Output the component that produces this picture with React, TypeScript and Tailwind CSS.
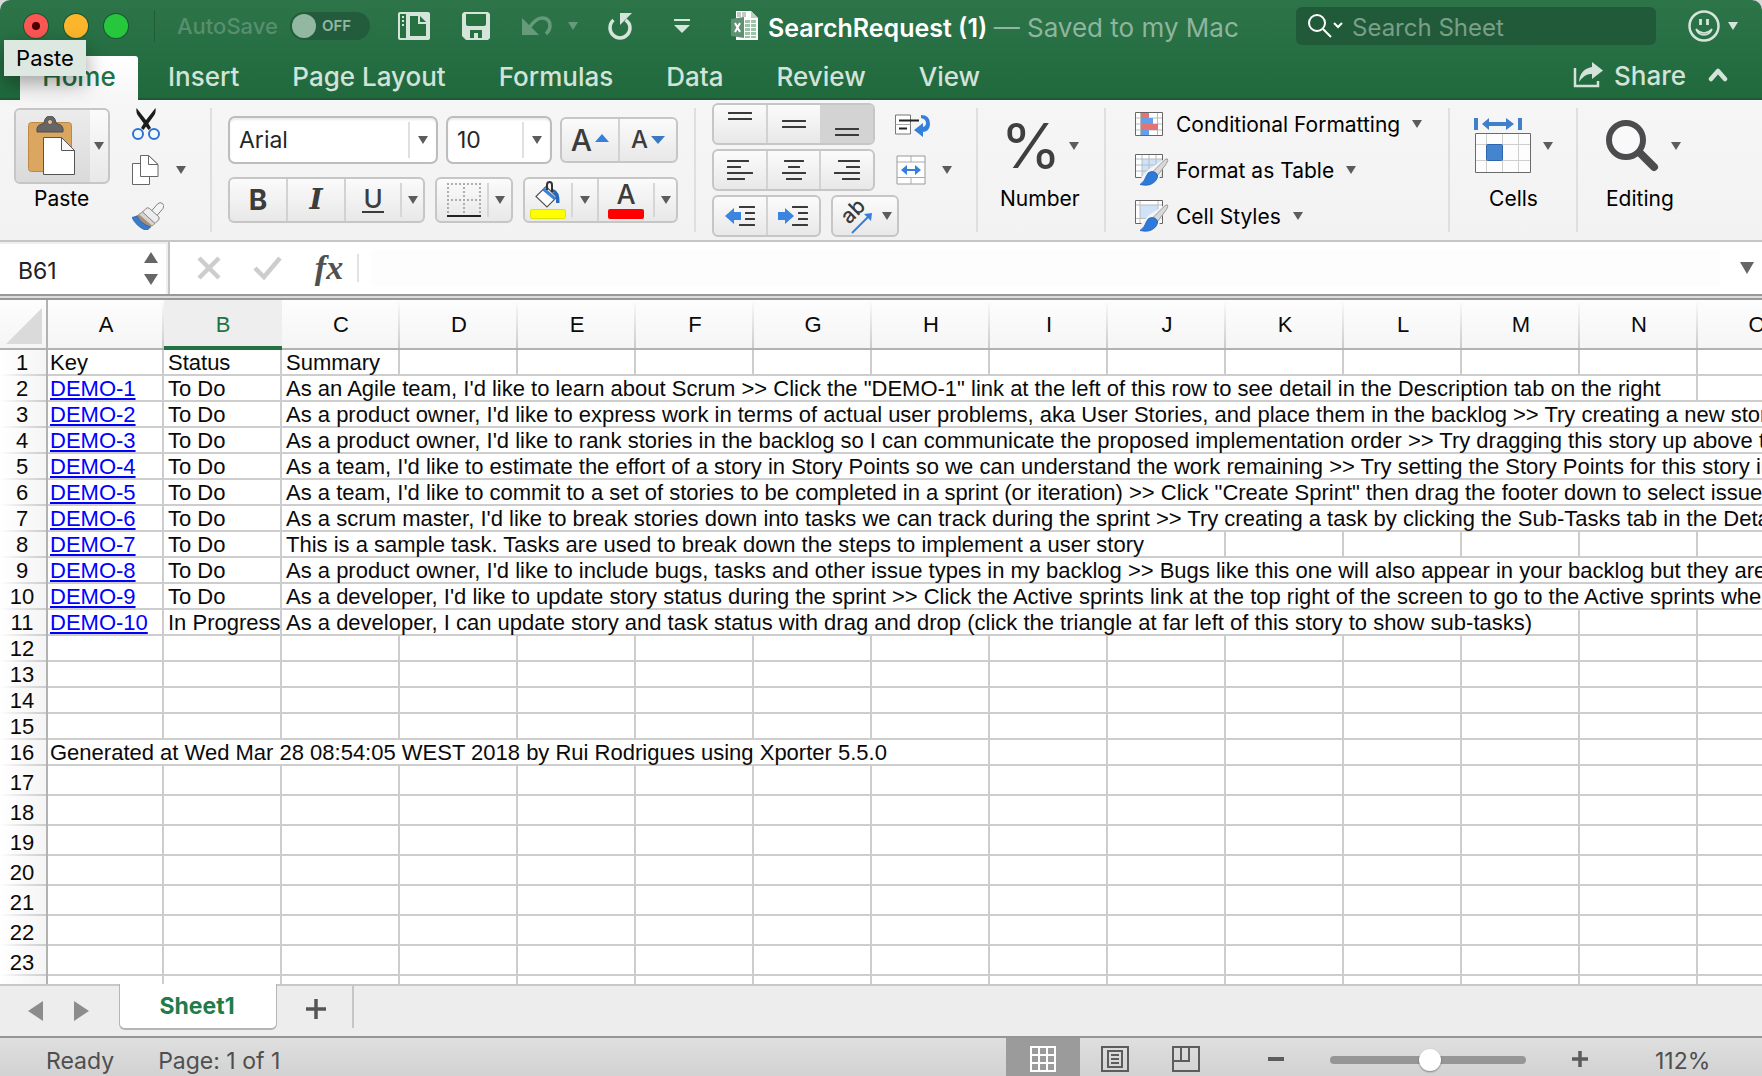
import React, { useState } from "react";

const SUMMARY_LINKS = [
  "As an Agile team, I'd like to learn about Scrum >> Click the \"DEMO-1\" link at the left of this row to see detail in the Description tab on the right",
  "As a product owner, I'd like to express work in terms of actual user problems, aka User Stories, and place them in the backlog >> Try creating a new story",
  "As a product owner, I'd like to rank stories in the backlog so I can communicate the proposed implementation order >> Try dragging this story up above the",
  "As a team, I'd like to estimate the effort of a story in Story Points so we can understand the work remaining >> Try setting the Story Points for this story in",
  "As a team, I'd like to commit to a set of stories to be completed in a sprint (or iteration) >> Click \"Create Sprint\" then drag the footer down to select issues",
  "As a scrum master, I'd like to break stories down into tasks we can track during the sprint >> Try creating a task by clicking the Sub-Tasks tab in the Detail",
  "This is a sample task. Tasks are used to break down the steps to implement a user story",
  "As a product owner, I'd like to include bugs, tasks and other issue types in my backlog >> Bugs like this one will also appear in your backlog but they are",
  "As a developer, I'd like to update story status during the sprint >> Click the Active sprints link at the top right of the screen to go to the Active sprints where",
  "As a developer, I can update story and task status with drag and drop (click the triangle at far left of this story to show sub-tasks)",
];
// Number of columns each summary runs across, starting at column C.
const SUMMARY_SPANS = [12, 13, 13, 13, 13, 13, 8, 13, 13, 11];
const COLUMNS = "ABCDEFGHIJKLMNO".split("");

type Cell = { text: string; span?: number; link?: boolean };

const ROWS: Cell[][] = [
  [{ text: "Key" }, { text: "Status" }, { text: "Summary" }],
  ...SUMMARY_LINKS.map((text, i) => [
    { text: `DEMO-${i + 1}`, link: true },
    { text: i === 9 ? "In Progress" : "To Do" },
    { text, span: SUMMARY_SPANS[i] },
  ]),
  [],
  [],
  [],
  [],
  [{ text: "Generated at Wed Mar 28 08:54:05 WEST 2018 by Rui Rodrigues using Xporter 5.5.0", span: 8 }],
  ...Array.from({ length: 8 }, () => []),
];

function Caret({ className = "h-2 w-2.5 text-[#5c5c5c]", up = false }: { className?: string; up?: boolean }) {
  return (
    <svg viewBox="0 0 10 8" preserveAspectRatio="none" className={`shrink-0 ${className}`} fill="currentColor" aria-hidden="true">
      <path d={up ? "M0 8h10L5 0z" : "M0 0h10L5 8z"} />
    </svg>
  );
}

const Short = () => <span className="my-1 w-0.5 shrink-0 bg-[#d6d6d6]" />;
const Full = () => <span className="w-0.5 shrink-0 bg-[#d2d2d2]" />;
const Sep = () => <span className="my-2 w-0.5 shrink-0 bg-[#dfdfdf]" />;

function Group({ className, children }: { className: string; children: React.ReactNode }) {
  return (
    <div className={`flex overflow-hidden rounded-[6px] border-2 border-[#c6c6c6] bg-linear-to-b from-[#fbfbfb] to-[#e8e8e8] ${className}`}>
      {children}
    </div>
  );
}

function Btn({ label, className = "", pressed, children }: { label: string; className?: string; pressed?: boolean; children: React.ReactNode }) {
  return (
    <button type="button" aria-label={label} aria-pressed={pressed} className={`flex shrink-0 items-center justify-center ${className}`}>
      {children}
    </button>
  );
}

/* Horizontal strokes, each as [x, y, width]. */
function Lines({ w = 26, lines, children }: { w?: number; lines: number[][]; children?: React.ReactNode }) {
  return (
    <svg width={w} height="38" viewBox={`0 0 ${w} 38`} aria-hidden="true">
      {lines.map(([x, y, len], i) => (
        <rect key={i} x={x} y={y - 1} width={len} height="2" rx="0.5" fill="#3a3a3a" />
      ))}
      {children}
    </svg>
  );
}

function PasteIcon() {
  return (
    <svg width="48" height="60" viewBox="0 0 48 60" aria-hidden="true">
      <rect x="0.5" y="6.5" width="43" height="49" rx="3" fill="#dba65f" stroke="#bd8748" />
      <path d="M9 16q-1-7 5-8l2-1q1-7 6-7t6 7l2 1q6 1 5 8z" fill="#666" stroke="#4f4f4f" />
      <circle cx="22" cy="6" r="2.5" fill="#e5c79c" stroke="#555" />
      <path d="M15.500 21.500h18l13 13v24h-31z" fill="#fff" stroke="#555" />
      <path d="M33.500 21.500v13h13z" fill="#f7f7f7" stroke="#555" />
    </svg>
  );
}

function CutIcon() {
  return (
    <svg width="28" height="32" viewBox="0 0 28 32" aria-hidden="true">
      <path d="M4.500 0Q3.500 5 7 9l9.500 13 2.500-2L15.500 14z" fill="#1c1c1c" />
      <path d="M23.500 0Q24.500 5 21 9l-9.500 13L9 20l3.500-6z" fill="#1c1c1c" />
      <circle cx="6" cy="26" r="5" fill="#f4f8fe" stroke="#2b73cf" strokeWidth="2" />
      <circle cx="22" cy="26" r="5" fill="#f4f8fe" stroke="#2b73cf" strokeWidth="2" />
    </svg>
  );
}

function CopyIcon() {
  return (
    <svg width="27" height="30" viewBox="0 0 27 30" fill="#fff" stroke="#666" aria-hidden="true">
      <path d="M.5 8.500h17v21H.5z" />
      <path d="M8.500.5h8l9.500 9v12H8.500z" />
      <path d="M16.500.5v9H26z" />
    </svg>
  );
}

function PainterIcon() {
  return (
    <svg width="32" height="28" viewBox="0 0 32 28" aria-hidden="true">
      <path d="M19 9.500l6.500-7.500q2.500-2.500 5-.5t.5 5L24.500 14z" fill="#f4f4f4" stroke="#808080" />
      <path d="M14 6.500q1.500-1.500 3.500 0l9 8q1.500 1.500 0 3.500L23 21.500 10.500 10z" fill="#ededed" stroke="#808080" />
      <path d="M10.500 10L23 21.500l-3 2.500L6.500 12.500z" fill="#d8d3cf" stroke="#8d8178" strokeWidth="0.800" />
      <path d="M6.500 12.500L20 24l-2.500 2Q8 22 4 14z" fill="#a58d76" />
      <path d="M0 15.500l5-1.500q4 8 13.500 11L15.500 28H13Q4 24 0 15.500z" fill="#3a7ccb" stroke="#2a62a9" strokeWidth="0.800" />
    </svg>
  );
}

function BucketIcon() {
  return (
    <svg width="28" height="28" viewBox="0 0 28 28" aria-hidden="true">
      <path d="M12 5.500L23 16 13 26 2 15.500z" fill="#fff" stroke="#555" strokeWidth="1.200" />
      <path d="M8 9l12 10 2-2.500L11 7z" fill="#3b83da" />
      <path d="M19 8q7 2 6.500 14h-3.500q1-8-4-12z" fill="#2566b8" />
      <path d="M13 9V4q0-3 2.500-3T18 4v7" fill="none" stroke="#333" strokeWidth="2" />
    </svg>
  );
}

function BordersIcon() {
  return (
    <svg width="34" height="34" viewBox="0 0 34 34" fill="none" stroke="#adadad" strokeWidth="2" strokeDasharray="2 2" aria-hidden="true">
      <path d="M0 1h34M0 17h34M1 0v32M17 0v32M33 0v32" />
      <path d="M0 33h34" stroke="#222" strokeDasharray="none" />
    </svg>
  );
}

function WrapIcon() {
  return (
    <svg width="36" height="24" viewBox="0 0 36 24" aria-hidden="true">
      <path d="M.5 1h15v19H.5z" fill="#fff" stroke="#777" />
      <path d="M.5 10.500h15" stroke="#aaa" />
      <path d="M4 6.500h20M4 14.500h8" stroke="#222" strokeWidth="2" />
      <path d="M26 1q9 0 9 9 0 7-7 8v5l-9-7 9-7v4q3-1 3-4 0-4-5-5z" fill="#3580dd" />
    </svg>
  );
}

function MergeIcon() {
  return (
    <svg width="30" height="30" viewBox="0 0 30 30" aria-hidden="true">
      <path d="M1 1h28v28H1z" fill="#fff" stroke="#999" />
      <path d="M1 7h28M1 22.500h28M15 1v6M15 22.500V29" stroke="#aaa" />
      <path d="M5 15l6-5v4h8v-4l6 5-6 5v-4h-8v4z" fill="#3580dd" />
    </svg>
  );
}

function CondIcon() {
  return (
    <svg width="28" height="24" viewBox="0 0 28 24" aria-hidden="true">
      <path d="M.5.5h27v23H.5z" fill="#fff" />
      <path d="M.5 6h27M.5 12h27M.5 18h27M5.500.5v23M22.500.5v23" stroke="#bbb" />
      <path d="M6 .5h8V6H6zM6 12h17v6H6z" fill="#e57373" />
      <path d="M6 6h12v6H6zM6 18h8v5.500H6z" fill="#62a0e8" />
      <path d="M.5.5h27v23H.5z" fill="none" stroke="#666" />
    </svg>
  );
}

function BrushTableIcon({ styles = false }: { styles?: boolean }) {
  return (
    <svg width="34" height="32" viewBox="0 0 34 32" aria-hidden="true">
      <path d="M.5.5h27v23H.5z" fill="#fff" />
      {styles ? (
        <>
          <path d="M5 5h18v14H5z" fill="#cfe2f7" />
          <path d="M.5 5h27M.5 18.500h27M5 .5v23M23 .5v23" stroke="#bbb" fill="none" />
        </>
      ) : (
        <>
          <path d="M7 5h20v18H7z" fill="#cfe2f7" />
          <path d="M.5 5h27M.5 11h27M.5 17h27M7 .5v23M14 .5v23M21 .5v23" stroke="#b4bcc6" fill="none" />
        </>
      )}
      <path d="M.5.5h27v23H.5z" fill="none" stroke="#666" />
      <path d="M31 4L14 15 6 24v8h12l7-9z" fill="#f4f4f4" />
      <path d="M32.500 5q1 1-1 4.500l-9 12-4.500-4L28.500 7q3-3 4-2z" fill="#d9d9d9" stroke="#888" strokeWidth="0.800" />
      <path d="M17 17.500q-4 0-5.500 4Q10 27 5 30.500q10 2.500 15.500-3.500 3-4 2-6-1.500-3.500-5.500-3.500z" fill="#2f79d9" stroke="#1f5fb4" strokeWidth="0.800" />
    </svg>
  );
}

function CellsIcon() {
  return (
    <svg width="58" height="56" viewBox="0 0 58 56" aria-hidden="true">
      <path d="M0 0h4v12H0zM44 0h4v12h-4z" fill="#3f7fcb" />
      <path d="M8 6l7-6v4h17V0l8 6-8 6V8H15v4z" fill="#3f7fcb" />
      <path d="M1.500 15.500h55v39h-55z" fill="#fdfdfd" />
      <path d="M1.500 26.500h55M1.500 42.500h55M12.500 15.500v39M28.500 15.500v39M44.500 15.500v39" stroke="#cfcfcf" />
      <path d="M1.500 15.500h55v39h-55z" fill="none" stroke="#6a6a6a" />
      <rect x="12.500" y="26.500" width="16" height="16" rx="1" fill="#4584ce" stroke="#2e66ab" />
    </svg>
  );
}

function SearchBigIcon() {
  return (
    <svg width="54" height="54" viewBox="0 0 54 54" fill="none" aria-hidden="true">
      <path d="M34 34l14 14" stroke="#4c4c4e" strokeWidth="8" strokeLinecap="round" />
      <circle cx="20" cy="21" r="17" fill="#f9f9f9" stroke="#4c4c4e" strokeWidth="6" />
    </svg>
  );
}

function ExcelIcon() {
  return (
    <svg width="28" height="30" viewBox="0 0 28 30" aria-hidden="true">
      <path d="M5 0h15l7 7v22H5z" fill="#fff" />
      <path d="M20 0v7h7z" fill="#b9cfc1" />
      <path d="M6 1h4v5H6zM11 1h4v5h-4z" fill="#c3c9c5" />
      <path d="M14 9h5v3h-5zM20 9h5v3h-5zM14 13h5v3h-5zM20 13h5v3h-5zM14 17h5v3h-5zM20 17h5v3h-5zM14 21h5v3h-5zM20 21h5v3h-5zM14 25h5v2h-5zM20 25h5v2h-5z" fill="#9cc5a8" />
      <path d="M0 8l13-2v21L0 25z" fill="#5f9273" />
      <path d="M4 12l5 9M9 12l-5 9" stroke="#fff" strokeWidth="2" />
    </svg>
  );
}

function RibbonRow({ icon, label }: { icon: React.ReactNode; label: string }) {
  return (
    <button type="button" className="flex h-[46px] items-center">
      <span className="flex w-[41px]">{icon}</span>
      <span className="pt-0.5">{label}</span>
      <Caret className="ml-3 h-2 w-2.5 text-[#5c5c5c]" />
    </button>
  );
}

function BigButton({ icon, label, iconClass = "", labelClass = "self-center" }: { icon: React.ReactNode; label: string; iconClass?: string; labelClass?: string }) {
  return (
    <button type="button" className="flex flex-col">
      <span className={`flex h-[60px] items-center gap-[11px] ${iconClass}`}>
        {icon}
        <Caret />
      </span>
      <span className={`mt-[11px] leading-6 ${labelClass}`}>{label}</span>
    </button>
  );
}

function TitleBar() {
  return (
    <div className="flex h-14 items-center pb-1 pl-6 pr-6">
      <div className="flex gap-4">
        <button type="button" aria-label="Close" className="flex size-6 items-center justify-center rounded-full bg-[#fc5753] ring-1 ring-[#1b5634]">
          <span className="size-2 rounded-full bg-[#4a0002]" />
        </button>
        <button type="button" aria-label="Minimize" className="size-6 rounded-full bg-[#fdb52b] ring-1 ring-[#1b5634]" />
        <button type="button" aria-label="Zoom window" className="size-6 rounded-full bg-[#27c73d] ring-1 ring-[#1b5634]" />
      </div>
      <span className="ml-[26px] h-8 w-px bg-[#1f5c39]" />
      <label className="ml-[22px] flex items-center gap-3 text-[22px] font-medium text-[#578f6e]">
        AutoSave
        <span className="relative flex h-7 w-20 items-center rounded-full bg-[#235c3c] pl-0.5">
          <input type="checkbox" role="switch" className="absolute inset-0 opacity-0" />
          <span className="size-6 rounded-full bg-[#93b8a2]" />
          <span className="ml-1.5 text-[15px] font-semibold text-[#93b8a2]">OFF</span>
        </span>
      </label>
      <div className="ml-7 flex items-center text-[#d5e5da]">
        <Btn label="Templates">
          <svg width="32" height="28" viewBox="0 0 32 28" aria-hidden="true">
            <rect width="32" height="28" rx="2" fill="currentColor" />
            <path d="M2 2h6v24H2zM12 4h8v8h8v12H12z" fill="#27703f" />
            <path d="M22 4l6 6h-6z" fill="#27703f" />
            <path d="M4 4h2v2H4zM4 8h2v2H4zM4 12h2v2H4z" fill="currentColor" />
          </svg>
        </Btn>
        <Btn label="Save" className="ml-8">
          <svg width="28" height="28" viewBox="0 0 28 28" aria-hidden="true">
            <path d="M2 0h24l2 2v24l-2 2H4l-4-4V2z" fill="currentColor" />
            <path d="M4 2h20v10q0 2-2 2H6q-2 0-2-2zM8 18h12v8h-4v-5h-4v5H8z" fill="#27703f" />
          </svg>
        </Btn>
        <Btn label="Undo" className="ml-8 gap-4 text-[#659a7a]">
          <svg width="30" height="20" viewBox="0 0 30 20" fill="none" aria-hidden="true">
            <path d="M0 2v17h17z" fill="currentColor" />
            <path d="M7 12Q14 2 20 2q8 0 8 8 0 4-4 8" stroke="currentColor" strokeWidth="3.500" />
          </svg>
          <Caret className="h-2 w-2.5" />
        </Btn>
        <Btn label="Redo" className="ml-[30px]">
          <svg width="24" height="27" viewBox="0 0 24 27" fill="none" aria-hidden="true">
            <path d="M5.500 7Q2 10 2 15q0 4 3 7t7 3 7-3 3-7q0-5-4.500-8" stroke="currentColor" strokeWidth="3.500" />
            <path d="M12 0h12L12 12z" fill="currentColor" />
          </svg>
        </Btn>
        <Btn label="Customize toolbar" className="ml-[42px] flex-col gap-1">
          <span className="h-0.5 w-4 bg-current" />
          <Caret className="h-2 w-4" />
        </Btn>
      </div>
      <div className="ml-[41px] flex items-center">
        <ExcelIcon />
        <h1 className="ml-[9px] whitespace-nowrap pt-1 text-[25px] font-semibold leading-8 text-white">
          SearchRequest (1) <span className="text-[26px] font-normal text-[#8fb59e]">— Saved to my Mac</span>
        </h1>
      </div>
      <div className="ml-auto flex h-[38px] w-[360px] items-center rounded-[6px] bg-[#215a39] pl-3">
        <svg width="36" height="26" viewBox="0 0 36 26" fill="none" stroke="#fff" strokeWidth="2" aria-hidden="true" className="shrink-0">
          <circle cx="9" cy="10" r="8" />
          <path d="M15 16l8 8M26 10l4 4 4-4" />
        </svg>
        <input type="search" aria-label="Search Sheet" placeholder="Search Sheet" className="ml-2 w-full bg-transparent pt-1 text-2xl leading-8 text-white outline-none placeholder:text-[#7a9f89]" />
      </div>
      <Btn label="Feedback" className="ml-8 gap-2 text-[#d5e5da]">
        <svg width="32" height="32" viewBox="0 0 32 32" fill="none" stroke="currentColor" strokeWidth="2.500" aria-hidden="true">
          <circle cx="16" cy="16" r="14.500" />
          <path d="M12.500 9v6M19.500 9v6" strokeWidth="2.800" />
          <path d="M8 19q8 8 16 0-2 6-8 6t-8-6z" strokeWidth="1.500" fill="currentColor" fillOpacity="0.3" />
        </svg>
        <Caret className="h-2 w-2.5" />
      </Btn>
    </div>
  );
}

function Tabs() {
  const rest = ["Insert", "Page Layout", "Formulas", "Data", "Review", "View"];
  return (
    <div className="flex h-11 items-stretch border-b-2 border-[#1c5a35] pl-5 pr-[34px] text-[26px] font-medium text-[#d3e3d9]">
      <nav className="flex">
        <button type="button" className="-mb-0.5 h-11 w-[118px] rounded-t-[3px] bg-linear-to-b from-white to-[#f6f6f6] pb-1 text-[#217346]">Home</button>
        <div className="ml-[30px] flex gap-[53px] pb-0.5">
          {rest.map((t) => (
            <button type="button" key={t}>{t}</button>
          ))}
        </div>
      </nav>
      <div className="ml-auto flex items-center gap-[22px] pb-1">
        <button type="button" className="flex items-center gap-[11px]">
          <svg width="30" height="26" viewBox="0 0 30 26" fill="none" aria-hidden="true">
            <path d="M2 6v18h23v-5" stroke="currentColor" strokeWidth="2.500" />
            <path d="M19 0l11 8.500L19 17v-5Q12 11 6 20 7 7 19 5z" fill="currentColor" />
          </svg>
          Share
        </button>
        <Btn label="Collapse ribbon">
          <svg width="20" height="14" viewBox="0 0 20 14" fill="none" stroke="currentColor" strokeWidth="4.500" strokeLinecap="round" strokeLinejoin="round" aria-hidden="true">
            <path d="M3 11l7-8 7 8" />
          </svg>
        </Btn>
      </div>
    </div>
  );
}

function Combo({ label, value, className }: { label: string; value: string; className: string }) {
  return (
    <div className={`relative flex h-12 rounded-[7px] border-2 border-[#bdbdbd] bg-white shadow-[inset_0_2px_2px_rgba(0,0,0,0.08)] ${className}`}>
      <select aria-label={label} defaultValue={value} className="w-full appearance-none bg-transparent pl-[9px] text-[23px] text-[#262626] outline-none">
        <option>{value}</option>
      </select>
      <span className="pointer-events-none absolute inset-y-1 right-0 flex w-[28px] items-center border-l-2 border-[#e0e0e0] pl-2">
        <Caret />
      </span>
    </div>
  );
}

function Ribbon() {
  return (
    <div className="flex h-[142px] shrink-0 overflow-hidden border-b-2 border-[#c6c6c6] bg-linear-to-b from-[#f6f6f6] to-[#f2f2f2] text-[21px] text-black">
      <div className="flex w-[210px] shrink-0 pl-3.5">
        <div className="flex w-24 flex-col pt-2">
          <Group className="h-[76px] w-24">
            <Btn label="Paste" className="w-[74px] bg-linear-to-b from-[#ececec] to-[#dadada] pr-0.5">
              <PasteIcon />
            </Btn>
            <Btn label="Paste options" className="flex-1">
              <Caret />
            </Btn>
          </Group>
          <span className="mt-[3px] pl-5 leading-6">Paste</span>
        </div>
        <div className="ml-[22px] pt-px">
          <Btn label="Cut" className="h-[46px]"><CutIcon /></Btn>
          <Btn label="Copy" className="h-[46px] gap-[17px]"><CopyIcon /><Caret /></Btn>
          <Btn label="Format painter" className="h-[46px]"><PainterIcon /></Btn>
        </div>
      </div>
      <Sep />
      <div className="flex w-[482px] shrink-0 flex-col gap-[13px] pl-4 pt-4">
        <div className="flex h-12 items-center">
          <Combo label="Font" value="Arial" className="w-[210px]" />
          <Combo label="Font size" value="10" className="ml-2 w-[106px]" />
          <Group className="ml-2 h-[46px] w-[118px] font-medium text-[#3c3c3c]">
            <Btn label="Increase font size" className="flex-1 gap-[3px] text-[30px]">
              A<Caret up className="mb-1 h-2 w-3.5 text-[#357fdd]" />
            </Btn>
            <Full />
            <Btn label="Decrease font size" className="flex-1 gap-[3px] text-2xl">
              A<Caret className="h-2 w-3.5 text-[#3a78c0]" />
            </Btn>
          </Group>
        </div>
        <div className="flex h-[46px] text-[#3c3c3c]">
          <Group className="w-[197px]">
            <Btn label="Bold" className="w-14 text-[28px] font-bold">B</Btn>
            <Full />
            <Btn label="Italic" className="w-14 font-['DejaVu_Serif','Liberation_Serif',serif] text-[28px] font-bold italic">I</Btn>
            <Full />
            <Btn label="Underline" className="w-[54px]">
              <span className="border-b-2 border-current px-px text-[26px] font-medium leading-6">U</span>
            </Btn>
            <Short />
            <Btn label="Underline options" className="flex-1"><Caret /></Btn>
          </Group>
          <Group className="ml-2.5 w-[78px]">
            <Btn label="Borders" className="w-[50px] pl-1"><BordersIcon /></Btn>
            <Short />
            <Btn label="Border options" className="flex-1"><Caret /></Btn>
          </Group>
          <Group className="ml-2.5 w-[155px]">
            <Btn label="Fill color" className="w-[46px] flex-col">
              <BucketIcon />
              <span className="h-2.5 w-9 rounded-[2px] border border-[#e2e200] bg-[#ffff00]" />
            </Btn>
            <Short />
            <Btn label="Fill color options" className="w-6"><Caret /></Btn>
            <Full />
            <Btn label="Font color" className="w-[54px] flex-col">
              <span className="h-7 text-[27px] font-medium leading-7">A</span>
              <span className="h-2.5 w-9 rounded-[2px] bg-[#ff0000]" />
            </Btn>
            <Short />
            <Btn label="Font color options" className="flex-1"><Caret /></Btn>
          </Group>
        </div>
      </div>
      <Sep />
      <div className="flex w-[280px] shrink-0 flex-col gap-1 pl-4 pt-[3px]">
        <div className="flex h-[42px]">
          <Group className="w-[163px]">
            <Btn label="Top align" className="flex-1"><Lines lines={[[1, 8, 24], [1, 14, 24]]} /></Btn>
            <Full />
            <Btn label="Middle align" className="flex-1"><Lines lines={[[1, 16, 24], [1, 22, 24]]} /></Btn>
            <Btn label="Bottom align" pressed className="w-[53px] bg-[#d3d3d3]"><Lines lines={[[1, 24, 24], [1, 30, 24]]} /></Btn>
          </Group>
          <Btn label="Wrap text" className="ml-5 pt-1"><WrapIcon /></Btn>
        </div>
        <div className="flex h-[42px]">
          <Group className="w-[163px]">
            <Btn label="Align left" className="flex-1"><Lines lines={[[0, 10, 22], [0, 16, 14], [0, 22, 26], [0, 28, 18]]} /></Btn>
            <Full />
            <Btn label="Center" className="flex-1"><Lines lines={[[3, 10, 20], [7, 16, 12], [1, 22, 24], [5, 28, 16]]} /></Btn>
            <Full />
            <Btn label="Align right" className="flex-1"><Lines lines={[[4, 10, 22], [12, 16, 14], [0, 22, 26], [8, 28, 18]]} /></Btn>
          </Group>
          <Btn label="Merge cells" className="ml-[21px] gap-4"><MergeIcon /><Caret /></Btn>
        </div>
        <div className="flex h-[42px]">
          <Group className="w-[109px]">
            <Btn label="Decrease indent" className="flex-1">
              <Lines w={30} lines={[[14, 10, 16], [20, 16, 10], [20, 22, 10], [14, 28, 16]]}>
                <path d="M0 19l9-8v4h7v8H9v4z" fill="#3b84e0" />
              </Lines>
            </Btn>
            <Full />
            <Btn label="Increase indent" className="flex-1">
              <Lines w={30} lines={[[14, 10, 16], [20, 16, 10], [20, 22, 10], [14, 28, 16]]}>
                <path d="M16 19l-9-8v4H0v8h7v4z" fill="#3b84e0" />
              </Lines>
            </Btn>
          </Group>
          <Group className="ml-2.5 w-[68px]">
            <Btn label="Orientation" className="flex-1 gap-[9px]">
              <svg width="34" height="36" viewBox="0 0 34 36" overflow="visible" aria-hidden="true">
                <text x="10" y="27" transform="rotate(-45 10 27)" fontSize="21" fontWeight="500" fill="#3a3a3a">ab</text>
                <path d="M13 35l17-17" stroke="#3580dd" strokeWidth="2" />
                <path d="M33 15l-1 8-7-7z" fill="#3580dd" />
              </svg>
              <Caret />
            </Btn>
          </Group>
        </div>
      </div>
      <Sep />
      <div className="flex w-[126px] shrink-0 pl-[22px] pt-4">
        <BigButton
          label="Number"
          iconClass="pl-1"
          icon={<span className="flex w-[54px] justify-center text-[62px] leading-[60px] text-[#3f3f3f]">%</span>}
        />
      </div>
      <Sep />
      <div className="flex w-[342px] shrink-0 flex-col items-start whitespace-nowrap pl-[29px] pt-px">
        <RibbonRow icon={<CondIcon />} label="Conditional Formatting" />
        <RibbonRow icon={<BrushTableIcon />} label="Format as Table" />
        <RibbonRow icon={<BrushTableIcon styles />} label="Cell Styles" />
      </div>
      <Sep />
      <div className="flex w-[126px] shrink-0 pl-6 pt-4">
        <BigButton label="Cells" icon={<CellsIcon />} />
      </div>
      <Sep />
      <div className="flex pl-7 pt-4">
        <BigButton label="Editing" labelClass="self-start" icon={<SearchBigIcon />} />
      </div>
    </div>
  );
}

function FormulaBar() {
  return (
    <div className="flex h-[58px] shrink-0 flex-col bg-white">
      <div className="flex h-[52px]">
        <div className="flex w-[170px] shrink-0 items-center border-r-2 border-[#c4c4c4] pl-[18px] pr-2.5 shadow-[inset_0_2px_0_#efefef,inset_-2px_0_0_#efefef]">
          <input aria-label="Name Box" defaultValue="B61" className="w-full min-w-0 bg-transparent pt-1.5 text-[23px] leading-7 text-[#222] outline-none" />
          <span className="flex flex-col gap-[11px]">
            <Btn label="Previous cell"><Caret up className="h-[11px] w-3.5 text-[#666]" /></Btn>
            <Btn label="Next cell"><Caret className="h-[11px] w-3.5 text-[#666]" /></Btn>
          </span>
        </div>
        <Btn label="Cancel" className="ml-[27px]">
          <svg width="24" height="24" viewBox="0 0 24 24" stroke="#cdcdcd" strokeWidth="4.500" aria-hidden="true"><path d="M2 2l20 20M22 2L2 22" /></svg>
        </Btn>
        <Btn label="Enter" className="ml-8">
          <svg width="30" height="24" viewBox="0 0 30 24" fill="none" stroke="#cdcdcd" strokeWidth="4.500" aria-hidden="true"><path d="M2 12l9 9L27 2" /></svg>
        </Btn>
        <Btn label="Insert function" className="ml-7 w-9 font-['Liberation_Serif',serif] text-[34px] font-bold italic leading-9 text-[#505050]">fx</Btn>
        <span className="my-3 ml-2.5 w-0.5 bg-[#e2e2e2]" />
        <input aria-label="Formula" className="mx-3 my-2 min-w-0 flex-1 bg-[#fdfdfd] text-[22px] outline-none" />
        <Btn label="Expand formula bar" className="w-[30px]"><Caret className="h-3 w-3.5 text-[#666]" /></Btn>
      </div>
      <div className="h-1.5 shrink-0 border-b-2 border-t-2 border-b-[#999] border-t-[#999] bg-[#dcdcdc]" />
    </div>
  );
}

function Sheet() {
  return (
    <div className="min-h-0 flex-1 overflow-hidden bg-white font-['Liberation_Sans',Arial,sans-serif] text-[22px] leading-[22px] text-[#0a0a0a]">
      <table className="w-[1816px] table-fixed border-separate border-spacing-0">
        <colgroup>
          <col className="w-12" />
          <col className="w-[116px]" />
          {COLUMNS.slice(1).map((c) => <col key={c} className="w-[118px]" />)}
        </colgroup>
        <thead>
          <tr>
            <th className="h-[50px] border-b-2 border-r-2 border-[#b2b2b2] bg-linear-to-b from-[#fdfdfd] to-[#f5f5f5] p-0">
              <svg width="36" height="36" viewBox="0 0 36 36" className="ml-1.5 mt-1" aria-hidden="true"><path d="M36 0v36H0z" fill="#dadada" /></svg>
            </th>
            {COLUMNS.map((c) => (
              <th
                key={c}
                scope="col"
                className={
                  c === "B"
                    ? "h-[50px] border-b-4 border-[#217346] bg-[#eeeeee] p-0 pt-1 font-normal text-[#217346]"
                    : "h-[50px] border-b-2 border-[#b2b2b2] bg-[linear-gradient(to_bottom,transparent,#cccccc),linear-gradient(to_bottom,#fdfdfd,#f5f5f5)] bg-[length:2px_100%,100%_100%] bg-[position:right_top,left_top] bg-no-repeat p-0 pt-0.5 font-normal"
                }
              >
                {c}
              </th>
            ))}
          </tr>
        </thead>
        <tbody>
          {ROWS.map((cells, r) => {
            const used = cells.reduce((n, c) => n + (c.span ?? 1), 0);
            const height = r < 16 ? "h-[26px]" : "h-[30px]";
            const blanks = Array.from({ length: COLUMNS.length - used });
            return (
              <tr key={r}>
                <th
                  scope="row"
                  className={`${height} border-r-2 border-[#b2b2b2] bg-[linear-gradient(to_right,transparent,#cccccc),linear-gradient(to_right,#ffffff,#f5f5f5)] bg-[length:100%_2px,100%_100%] bg-[position:left_bottom,left_top] bg-no-repeat p-0 pb-0.5 pr-0.5 text-center align-bottom font-normal`}
                >
                  {r < 23 ? r + 1 : ""}
                </th>
                {cells.map((c, i) => (
                  <td key={i} colSpan={c.span} className={`border-b-2 border-r-2 border-[#cdcdcd] p-0 align-bottom whitespace-nowrap ${i === 0 ? "pl-0.5" : "pl-1"}`}>
                    {c.link ? <a href="#" className="text-[#0000ff] underline decoration-2 underline-offset-2">{c.text}</a> : c.text}
                  </td>
                ))}
                {blanks.map((_, i) => (
                  <td key={`b${i}`} className="border-b-2 border-r-2 border-[#cdcdcd] p-0" />
                ))}
              </tr>
            );
          })}
        </tbody>
      </table>
    </div>
  );
}

function SheetTabs() {
  return (
    <div className="flex h-[52px] shrink-0 bg-[#ededed] shadow-[inset_0_2px_0_#c8c8c8]">
      <div className="flex w-[119px] shrink-0 items-center gap-[31px] pl-7 pt-0.5 text-[#8c8c8c]">
        <Btn label="Previous sheet"><svg width="15" height="20" viewBox="0 0 15 20" fill="currentColor" aria-hidden="true"><path d="M15 0v20L0 10z" /></svg></Btn>
        <Btn label="Next sheet"><svg width="15" height="20" viewBox="0 0 15 20" fill="currentColor" aria-hidden="true"><path d="M0 0v20l15-10z" /></svg></Btn>
      </div>
      <button type="button" className="h-[46px] w-[158px] rounded-b-[6px] border-x border-b-2 border-[#b5b5b5] bg-white pr-0.5 text-[23px] font-bold text-[#217c4b]">Sheet1</button>
      <Btn label="Add sheet" className="ml-3 w-[54px] pb-0.5">
        <svg width="20" height="20" viewBox="0 0 20 20" stroke="#555" strokeWidth="3.500" aria-hidden="true"><path d="M10 0v20M0 10h20" /></svg>
      </Btn>
      <span className="mb-2 ml-[9px] mt-0.5 w-0.5 bg-[#c6c6c6]" />
    </div>
  );
}

function StatusBar() {
  const [zoom, setZoom] = useState(112);
  return (
    <div className="flex h-10 shrink-0 border-t-2 border-[#969696] bg-linear-to-b from-[#dfdfdf] to-[#d2d2d2] pl-[46px] pr-[51px] text-[23px] text-[#4f4f4f]">
      <div className="flex items-center gap-11 whitespace-nowrap pt-2">
        <span>Ready</span>
        <span>Page: 1 of 1</span>
      </div>
      <div className="ml-auto flex items-center text-[#5c5c5c]">
        <Btn label="Normal view" pressed className="h-full w-[74px] bg-[#9b9b9b] pt-1">
          <svg width="26" height="26" viewBox="0 0 26 26" fill="none" stroke="#fff" strokeWidth="2" aria-hidden="true"><path d="M1 1h24v24H1zM1 9h24M1 17h24M9 1v24M17 1v24" /></svg>
        </Btn>
        <Btn label="Page layout view" className="h-full w-[70px] pt-1">
          <svg width="28" height="26" viewBox="0 0 28 26" fill="none" stroke="currentColor" strokeWidth="2" aria-hidden="true"><path d="M1 1h26v24H1zM7 5h14v16H7zM10 9h8M10 13h8M10 17h8" /></svg>
        </Btn>
        <Btn label="Page break view" className="h-full w-[72px] pt-1">
          <svg width="28" height="26" viewBox="0 0 28 26" fill="none" stroke="currentColor" strokeWidth="2" aria-hidden="true"><path d="M1 1h26v24H1zM1 15h16V1M9 1v14" /></svg>
        </Btn>
        <Btn label="Zoom out" className="ml-[34px] h-full w-10 pt-1"><span className="h-1 w-4 bg-current" /></Btn>
        <input
          type="range"
          aria-label="Zoom"
          min={10}
          max={210}
          value={zoom}
          onChange={(e) => setZoom(Number(e.target.value))}
          className="mx-[34px] mt-1.5 h-2 w-[196px] appearance-none rounded-full bg-[#969696] [&::-webkit-slider-thumb]:size-[22px] [&::-webkit-slider-thumb]:appearance-none [&::-webkit-slider-thumb]:rounded-full [&::-webkit-slider-thumb]:bg-white [&::-webkit-slider-thumb]:shadow-[0_1px_2px_rgba(0,0,0,0.4)]"
        />
        <Btn label="Zoom in" className="h-full w-10 pt-1">
          <svg width="16" height="16" viewBox="0 0 16 16" stroke="currentColor" strokeWidth="3.500" aria-hidden="true"><path d="M8 0v16M0 8h16" /></svg>
        </Btn>
        <span className="ml-[55px] w-14 pt-2 text-[#4f4f4f]">{zoom}%</span>
      </div>
    </div>
  );
}

export default function App() {
  return (
    <div className="bg-[#d8d8d8]">
      <div className="relative flex h-screen flex-col overflow-hidden rounded-t-[10px] bg-white font-[Inter,'Liberation_Sans',sans-serif]">
        <header className="h-[100px] shrink-0 bg-linear-to-b from-[#2d7449] to-[#1f693d]">
          <TitleBar />
          <Tabs />
        </header>
        <Ribbon />
        <FormulaBar />
        <Sheet />
        <SheetTabs />
        <StatusBar />
        <div role="tooltip" className="absolute left-1 top-10 flex h-9 w-[82px] items-center justify-center bg-[#dde8e0] text-[22px] text-black shadow-[0_8px_20px_rgba(0,0,0,0.35)]">
          Paste
        </div>
      </div>
    </div>
  );
}
